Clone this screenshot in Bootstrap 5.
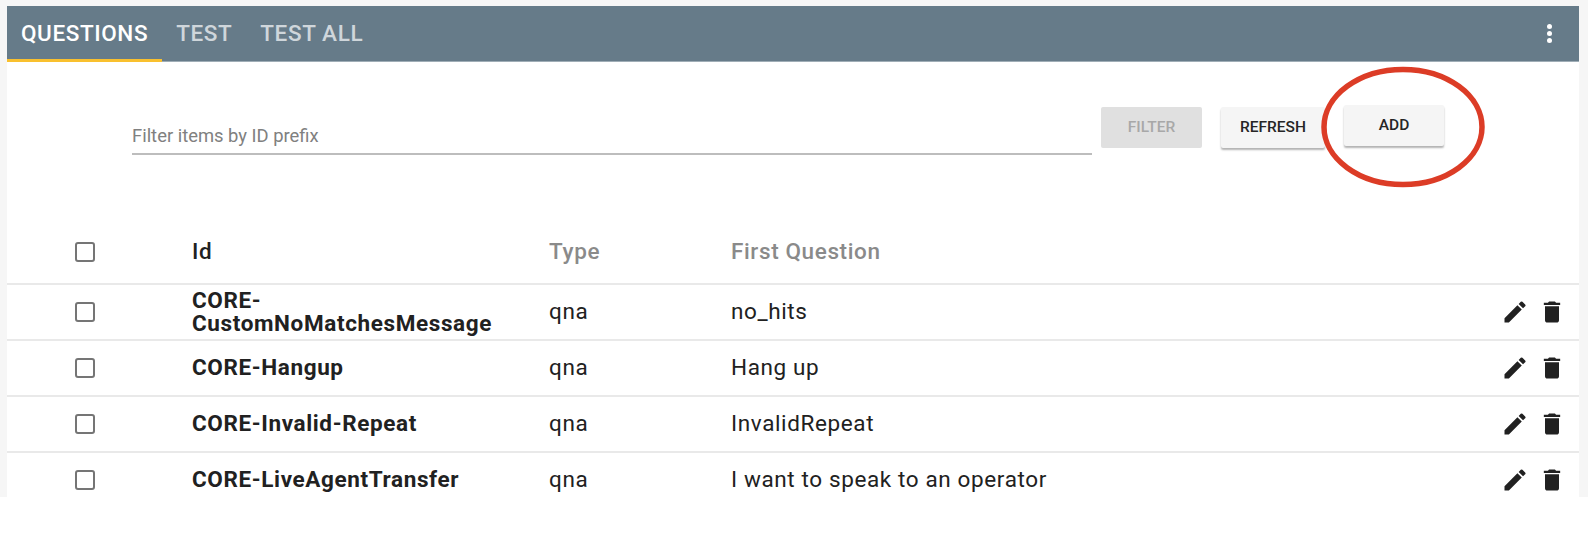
<!DOCTYPE html>
<html lang="en">
<head>
    <meta charset="UTF-8">
    <meta name="viewport" content="width=device-width, initial-scale=1.0">
    <title>Questions</title>
    <link href="https://cdn.jsdelivr.net/npm/bootstrap@5.3.0/dist/css/bootstrap.min.css" rel="stylesheet">
    <style>
        html, body { background: #fff; overflow: hidden; }
        body { font-family: Roboto, "Liberation Sans", sans-serif; color: #212121; }
        .page-clip { height: 497px; overflow: hidden; background: #f6f6f6; padding: 6px 9px 0 7px; position: relative; }
        .panel-box { background: #fff; height: 600px; }
        .tab-bar { background: #667b89; height: 56px; border-bottom: 1px solid #9fadb6; }
        .tab-item { font-size: 22.5px; font-weight: 500; letter-spacing: .6px; color: #cfd6db; padding: 0 14px; height: 56px; line-height: 54px; text-decoration: none; }
        .tab-item.on { color: #fff; border-bottom: 3px solid #f9c02e; }
        .more-dots { width: 5px; margin-right: 27px; padding-top: 2px; }
        .dot-one { width: 5px; height: 5px; background: #fff; border-radius: 50%; margin: 0 0 2px; }
        .filter-row { padding-top: 45px; padding-left: 125px; height: 166px; }
        .filter-field { width: 960px; height: 48px; border-bottom: 2px solid #bdbdbd; font-size: 18.4px; color: #808080; padding-top: 15px; margin-right: 9px; }
        .flat-btn { width: 101px; height: 41px; font-size: 15.5px; font-weight: 500; border-radius: 2px; padding: 0; border: 0; color: #262626; background: #f5f5f5; box-shadow: 0 2px 2px rgba(0,0,0,.3); }
        .flat-btn.off { background: #e0e0e0; color: #a8a8a8; box-shadow: none; }
        .flat-btn.refresh-btn { width: 104px; margin-left: 19px; }
        .flat-btn.add-btn { width: 100px; margin-left: 19px; margin-top: -2px; }
        .q-table { table-layout: fixed; width: 100%; font-size: 22.5px; letter-spacing: .62px; margin: 0; }
        .q-table th, .q-table td { padding: 0 0 1px; vertical-align: middle; border-bottom: 2px solid #e9e9e9; color: #212121; line-height: 23px; }
        .q-table thead th { height: 56px; padding-bottom: 8px; font-weight: 500; color: #8a8a8a; }
        .q-table thead th.id-head { color: #212121; }
        .q-table tbody td { height: 56px; }
        .q-table .id-cell { font-weight: 700; }
        .c-check { width: 185px; }
        .c-id { width: 357px; }
        .c-type { width: 182px; }
        .c-actions { width: 78px; }
        .box-check { display: block; width: 20px; height: 20px; margin-left: 68px; border: 2px solid #757575; border-radius: 3px; }
        .act-icons { display: flex; gap: 8.5px; align-items: center; }
        .ring-mark { position: absolute; left: 1318px; top: 64px; width: 170px; height: 126px; }
    </style>
</head>
<body>
    <div class="page-clip">
        <div class="panel-box">
            <div class="tab-bar d-flex align-items-start">
                <a class="tab-item on" href="#">QUESTIONS</a>
                <a class="tab-item" href="#">TEST</a>
                <a class="tab-item" href="#">TEST ALL</a>
                <div class="more-dots ms-auto mt-3">
                    <div class="dot-one"></div>
                    <div class="dot-one"></div>
                    <div class="dot-one"></div>
                </div>
            </div>

            <div class="filter-row d-flex align-items-start">
                <div class="filter-field">Filter items by ID prefix</div>
                <button class="flat-btn off" disabled>FILTER</button>
                <button class="flat-btn refresh-btn">REFRESH</button>
                <button class="flat-btn add-btn">ADD</button>
            </div>

            <table class="table q-table">
                <colgroup>
                    <col class="c-check"><col class="c-id"><col class="c-type"><col><col class="c-actions">
                </colgroup>
                <thead>
                    <tr>
                        <th><span class="box-check"></span></th>
                        <th class="id-head">Id</th>
                        <th>Type</th>
                        <th>First Question</th>
                        <th></th>
                    </tr>
                </thead>
                <tbody id="rows"></tbody>
            </table>
        </div>
        <svg class="ring-mark" viewBox="0 0 170 126">
            <ellipse cx="85" cy="63" rx="79" ry="57.5" fill="none" stroke="#dc3c26" stroke-width="5.5"/>
        </svg>
    </div>

    <script src="https://cdn.jsdelivr.net/npm/bootstrap@5.3.0/dist/js/bootstrap.bundle.min.js"></script>
    <script>
        const questions = [
            ['CORE-CustomNoMatchesMessage', 'qna', 'no_hits'],
            ['CORE-Hangup', 'qna', 'Hang up'],
            ['CORE-Invalid-Repeat', 'qna', 'InvalidRepeat'],
            ['CORE-LiveAgentTransfer', 'qna', 'I want to speak to an operator']
        ];
        const pencil = '<svg width="28" height="28" viewBox="0 0 24 24" fill="#212121"><path d="M3 17.25V21h3.75L17.81 9.94l-3.75-3.75L3 17.25zM20.71 7.04a1 1 0 0 0 0-1.41l-2.34-2.34a1 1 0 0 0-1.41 0l-1.83 1.83 3.75 3.75 1.83-1.83z"/></svg>';
        const trash = '<svg width="28" height="28" viewBox="0 0 24 24" fill="#212121"><path d="M6 19c0 1.1.9 2 2 2h8c1.1 0 2-.9 2-2V7H6v12zM19 4h-3.5l-1-1h-5l-1 1H5v2h14V4z"/></svg>';

        document.getElementById('rows').innerHTML = questions.map(q => `
            <tr>
                <td><span class="box-check"></span></td>
                <td class="id-cell">${q[0]}</td>
                <td>${q[1]}</td>
                <td>${q[2]}</td>
                <td><div class="act-icons">${pencil}${trash}</div></td>
            </tr>`).join('');
    </script>
</body>
</html>
